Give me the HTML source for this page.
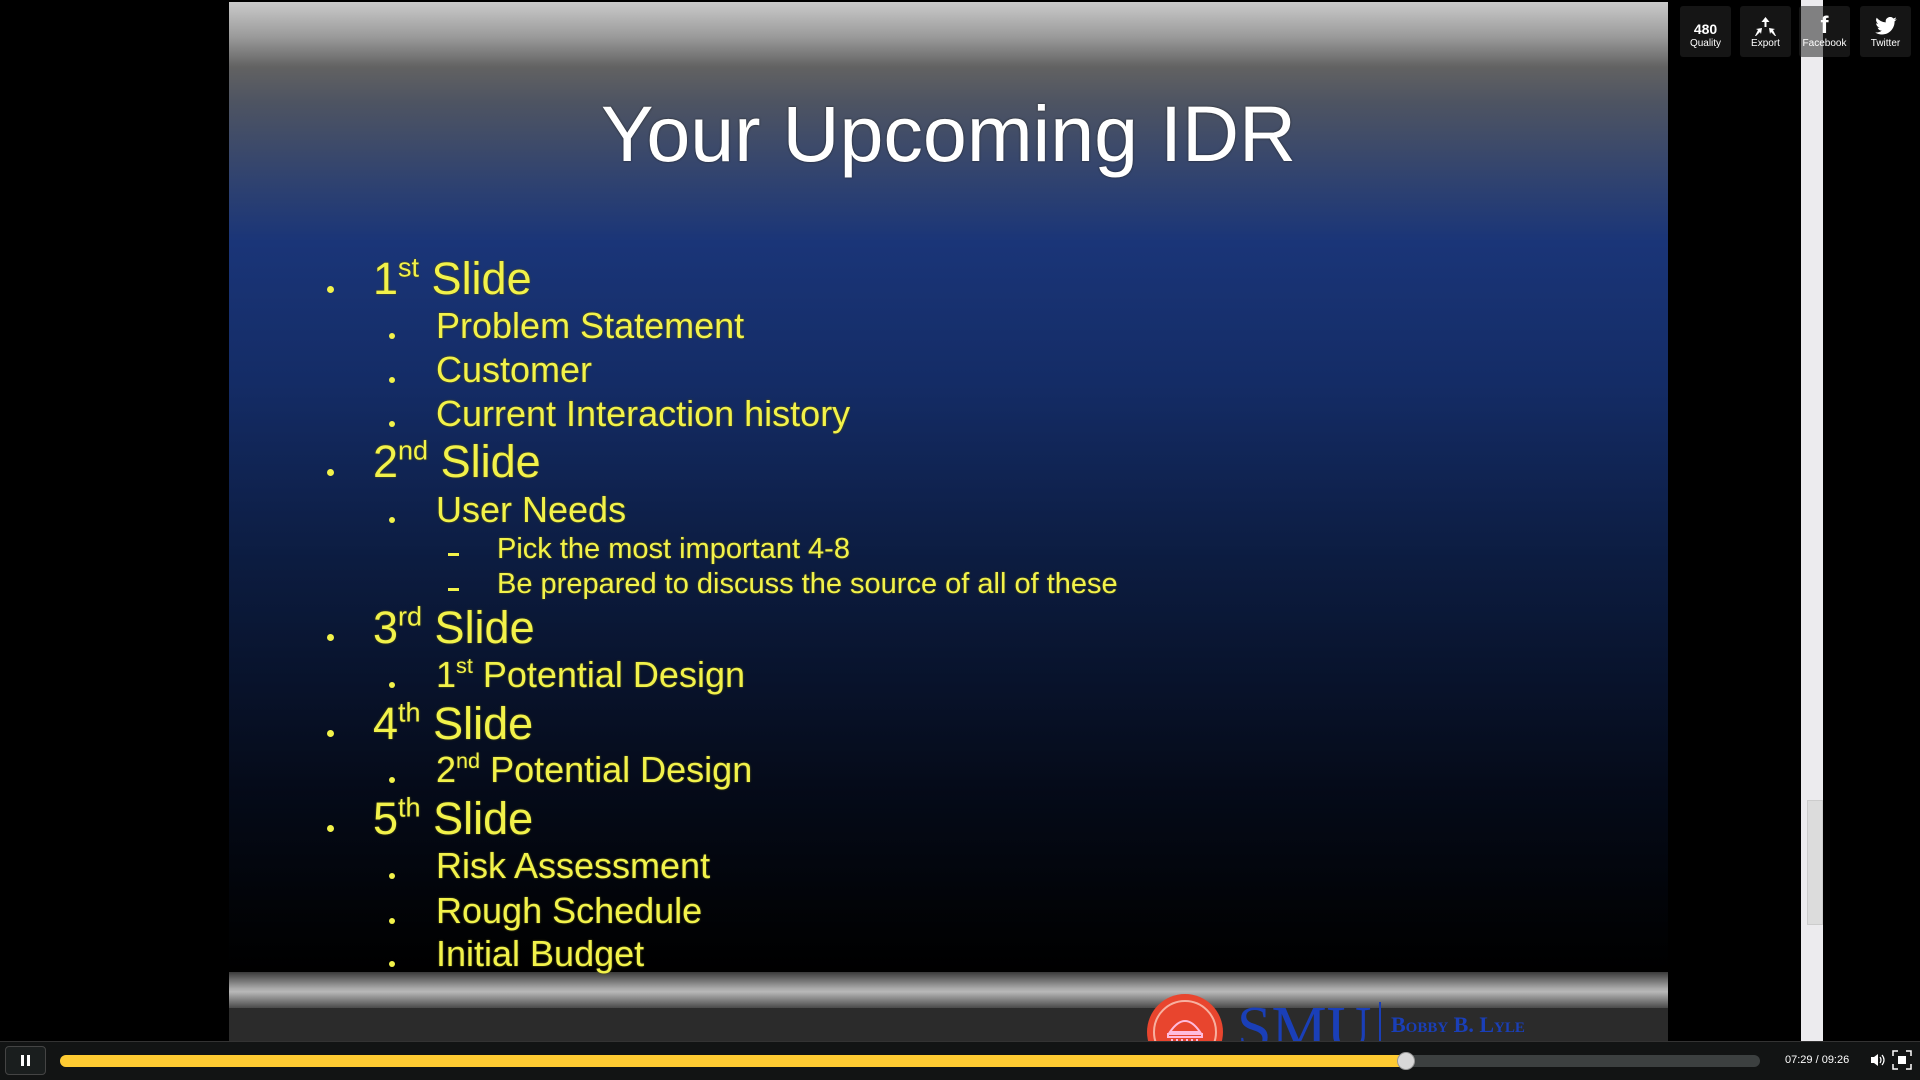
<!DOCTYPE html>
<html><head><meta charset="utf-8"><style>
*{margin:0;padding:0;box-sizing:border-box}
body{width:1920px;height:1080px;background:#000;position:relative;overflow:hidden;font-family:"Liberation Sans",Arial,sans-serif}
#slide{position:absolute;left:229px;top:2px;width:1439px;height:1060px;
background:linear-gradient(to bottom,#cacaca 0px,#9a9a9a 35px,#626262 65px,#4e5462 100px,#2f4270 180px,#1a3578 240px,#142c66 380px,#0c1c40 560px,#050b1a 780px,#010204 930px,#000 970px)}
.bar{position:absolute;left:0;width:100%;top:970px;height:36px;background:linear-gradient(to bottom,#3a3a3a,#a8a8a8 45%,#b8b8b8 55%,#4a4a4a)}
.low{position:absolute;left:0;width:100%;top:1006px;height:60px;background:#2b2b2b}
.t{position:absolute;white-space:nowrap;color:#f2f24a;text-shadow:0 0 2px #5a5a10,0 0 1px #333}
.t sup{font-size:.6em;vertical-align:.65em;line-height:0}
.s{font-size:36px;line-height:1}
.title{position:absolute;left:0;width:100%;text-align:center;top:92px;font-size:79px;color:#fff;text-shadow:0 0 2px #222;line-height:1}
.dot{position:absolute;width:7px;height:7px;border-radius:50%;background:#f2f24a}
.dash{position:absolute;width:11px;height:3px;background:#f2f24a}
#scroll{position:absolute;left:1801px;top:0;width:22px;height:1042px;background:#ecebee}
.btn{position:absolute;top:6px;width:51px;height:51px;background:#151515;border-radius:3px;color:#fff;text-align:center;font-size:10px}
.btn .lbl{position:absolute;bottom:8px;width:100%}
#ctrl{position:absolute;left:0;top:1041px;width:1920px;height:39px;background:#121414;border-top:1px solid #333}
</style></head><body>
<div id="slide">
<div class="title">Your Upcoming IDR</div>
<div class="bar"></div><div class="low"></div>
<svg style="position:absolute;left:917px;top:992px" width="80" height="80"><circle cx="39" cy="38" r="38" fill="#e8452e"/><circle cx="39" cy="38" r="31" fill="none" stroke="#f7b0a0" stroke-width="2"/><path d="M24 38 Q39 16 54 38 Z M22 40h34v3H22z M26 45v16M31 45v16M36 45v16M41 45v16M46 45v16M51 45v16" stroke="#fbd" stroke-width="2" fill="none"/></svg>
<div style="position:absolute;left:1008px;top:996px;font-family:'Liberation Serif',serif;font-size:62px;color:#1a3fb8;line-height:1">SMU</div>
<div style="position:absolute;left:1150px;top:1000px;width:2px;height:60px;background:#1a3fb8"></div>
<div style="position:absolute;left:1162px;top:1010px;font-family:'Liberation Serif',serif;font-size:22px;font-weight:bold;color:#1a3fb8;font-variant:small-caps">Bobby B. Lyle</div>
<div style="position:absolute;left:1162px;top:1038px;font-family:'Liberation Serif',serif;font-size:22px;color:#1a3fb8;font-variant:small-caps">School of Engineering</div>
</div>
<div class="dot" style="left:327px;top:286px"></div><div class="t" style="left:373px;top:256px;font-size:45px;line-height:1">1<sup>st</sup> Slide</div>
<div class="dot" style="left:389px;top:333px;width:6px;height:6px"></div><div class="t s" style="left:436px;top:308px">Problem Statement</div>
<div class="dot" style="left:389px;top:377px;width:6px;height:6px"></div><div class="t s" style="left:436px;top:352px">Customer</div>
<div class="dot" style="left:389px;top:421px;width:6px;height:6px"></div><div class="t s" style="left:436px;top:396px">Current Interaction history</div>
<div class="dot" style="left:327px;top:469px"></div><div class="t" style="left:373px;top:439px;font-size:45px;line-height:1">2<sup>nd</sup> Slide</div>
<div class="dot" style="left:389px;top:517px;width:6px;height:6px"></div><div class="t s" style="left:436px;top:492px">User Needs</div>
<div class="dash" style="left:448px;top:553px"></div><div class="t" style="left:497px;top:535px;font-size:29px;line-height:1">Pick the most important 4-8</div>
<div class="dash" style="left:448px;top:588px"></div><div class="t" style="left:497px;top:570px;font-size:29px;line-height:1">Be prepared to discuss the source of all of these</div>
<div class="dot" style="left:327px;top:634px"></div><div class="t" style="left:373px;top:605px;font-size:45px;line-height:1">3<sup>rd</sup> Slide</div>
<div class="dot" style="left:389px;top:682px;width:6px;height:6px"></div><div class="t s" style="left:436px;top:657px">1<sup>st</sup> Potential Design</div>
<div class="dot" style="left:327px;top:730px"></div><div class="t" style="left:373px;top:701px;font-size:45px;line-height:1">4<sup>th</sup> Slide</div>
<div class="dot" style="left:389px;top:777px;width:6px;height:6px"></div><div class="t s" style="left:436px;top:752px">2<sup>nd</sup> Potential Design</div>
<div class="dot" style="left:327px;top:825px"></div><div class="t" style="left:373px;top:796px;font-size:45px;line-height:1">5<sup>th</sup> Slide</div>
<div class="dot" style="left:389px;top:873px;width:6px;height:6px"></div><div class="t s" style="left:436px;top:848px">Risk Assessment</div>
<div class="dot" style="left:389px;top:918px;width:6px;height:6px"></div><div class="t s" style="left:436px;top:893px">Rough Schedule</div>
<div class="dot" style="left:389px;top:961px;width:6px;height:6px"></div><div class="t s" style="left:436px;top:936px">Initial Budget</div>

<div id="scroll"><div style="position:absolute;left:6px;top:800px;width:16px;height:125px;background:#dcdcdc;border:1px solid #ccc"></div></div>
<div class="btn" style="left:1680px"><div style="position:absolute;top:15px;width:100%;font-size:14px;font-weight:bold">480</div><div class="lbl">Quality</div></div>
<div class="btn" style="left:1740px"><svg style="position:absolute;left:13px;top:10px" width="25" height="22"><path d="M12.5 1l-4 5h3v5h2V6h3z M2 20l3-6-2-1 6-1-1 6-1-2-4 4z M23 20l-3-6 2-1-6-1 1 6 1-2 4 4z" fill="#fff"/></svg><div class="lbl">Export</div></div>
<div class="btn" style="left:1799px;background:rgba(40,40,40,.55)"><div style="position:absolute;top:6px;width:100%;font-size:24px;font-weight:bold">f</div><div class="lbl">Facebook</div></div>
<div class="btn" style="left:1860px"><svg style="position:absolute;left:15px;top:11px" width="22" height="18" viewBox="0 0 24 20"><path d="M24 2.4a10 10 0 0 1-2.8.8A5 5 0 0 0 23.3.4a10 10 0 0 1-3.1 1.2A4.9 4.9 0 0 0 11.8 6 14 14 0 0 1 1.7.9a4.9 4.9 0 0 0 1.5 6.6 5 5 0 0 1-2.2-.6 4.9 4.9 0 0 0 3.9 4.8 5 5 0 0 1-2.2.1 4.9 4.9 0 0 0 4.6 3.4A9.900 9.900 0 0 1 0 17.2 14 14 0 0 0 7.5 19.4c9 0 14-7.5 14-14v-.6A10 10 0 0 0 24 2.4z" fill="#fff"/></svg><div class="lbl">Twitter</div></div>

<div id="ctrl">
<div style="position:absolute;left:5px;top:4px;width:41px;height:29px;border:1px solid #444;border-radius:4px;background:#1a1e1e"></div>
<div style="position:absolute;left:21px;top:13px;width:3px;height:11px;background:#fff"></div>
<div style="position:absolute;left:27px;top:13px;width:3px;height:11px;background:#fff"></div>
<div style="position:absolute;left:60px;top:13px;width:1700px;height:12px;border-radius:6px;background:#3c4040"></div>
<div style="position:absolute;left:60px;top:13px;width:1347px;height:12px;border-radius:6px 0 0 6px;background:#fecb32"></div>
<div style="position:absolute;left:1397px;top:10px;width:18px;height:18px;border-radius:50%;background:#d8d8d8;border:1px solid #999"></div>
<div style="position:absolute;left:1785px;top:12px;color:#fff;font-size:11px">07:29 / 09:26</div>
<svg style="position:absolute;left:1870px;top:11px" width="16" height="14"><path d="M1 4h3l4-3v12l-4-3H1z" fill="#fff"/><path d="M10 4q2 3 0 6M12 2q4 5 0 10" stroke="#fff" fill="none" stroke-width="1.2"/></svg>
<svg style="position:absolute;left:1892px;top:8px" width="20" height="20"><path d="M1 6V1h5M14 1h5v5M19 14v5h-5M6 19H1v-5" stroke="#fff" fill="none" stroke-width="1.5"/><rect x="6" y="6" width="8" height="8" fill="#fff"/></svg>
</div>
</body></html>
